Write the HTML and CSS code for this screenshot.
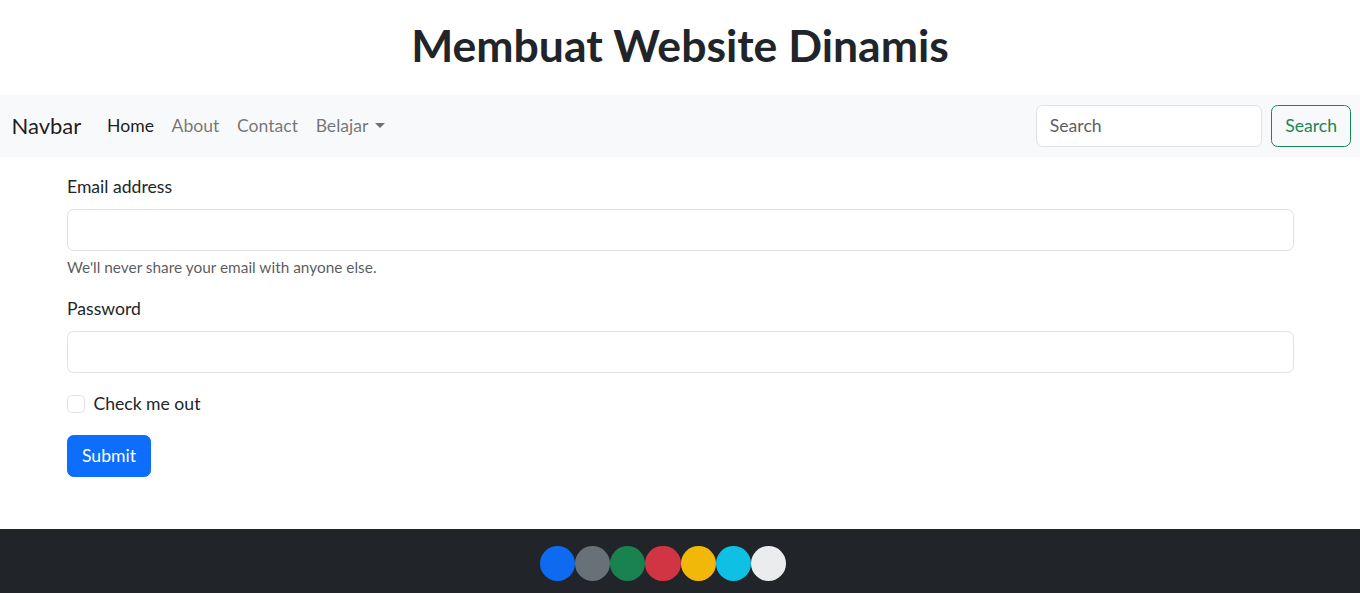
FILE: index.html
```html
<!DOCTYPE html>
<html lang="id">
<head>
<meta charset="utf-8">
<title>Membuat Website Dinamis</title>
<link rel="stylesheet" href="styles.css">
</head>
<body>
<header class="page-head">
  <h1 class="title">Membuat Website Dinamis</h1>
</header>
<nav class="navbar">
  <div class="nav-left">
    <a class="brand" href="#">Navbar</a>
    <ul class="nav-links">
      <li><a class="nav-link active" href="#">Home</a></li>
      <li><a class="nav-link" href="#">About</a></li>
      <li><a class="nav-link" href="#">Contact</a></li>
      <li><a class="nav-link dropdown" href="#">Belajar<span class="caret"></span></a></li>
    </ul>
  </div>
  <form class="search">
    <input class="search-input" type="search" placeholder="Search">
    <button class="btn-outline" type="button">Search</button>
  </form>
</nav>
<main class="container">
  <form class="form">
    <div class="field">
      <label class="label">Email address</label>
      <input class="control" type="email">
      <div class="help">We'll never share your email with anyone else.</div>
    </div>
    <div class="field">
      <label class="label">Password</label>
      <input class="control" type="password">
    </div>
    <div class="field check">
      <span class="check-box"></span>
      <label class="check-label">Check me out</label>
    </div>
    <button class="btn-primary" type="button">Submit</button>
  </form>
</main>
<footer class="footer">
  <div class="dots">
    <span class="dot c1"></span>
    <span class="dot c2"></span>
    <span class="dot c3"></span>
    <span class="dot c4"></span>
    <span class="dot c5"></span>
    <span class="dot c6"></span>
    <span class="dot c7"></span>
  </div>
</footer>
</body>
</html>
```
FILE: styles.css
```css
* { box-sizing: border-box; }
html, body { margin: 0; padding: 0; }
body {
  font-family: Lato, "Noto Sans", sans-serif;
  font-size: 17.6px;
  line-height: 1.5;
  color: #212529;
  background: #fff;
  min-height: 593px;
  display: flex;
  flex-direction: column;
}
.page-head {
  height: 95px;
  padding-top: 19px;
}
.title {
  margin: 0;
  text-align: center;
  font-size: 44.5px;
  font-weight: 700;
  line-height: 52.8px;
  color: #212529;
}
.navbar {
  height: 61.6px;
  background: #f8f9fa;
  display: flex;
  align-items: center;
  justify-content: space-between;
  padding: 0 8.8px 0 11.5px;
}
.nav-left { display: flex; align-items: center; }
.brand {
  font-size: 22px;
  color: rgba(0,0,0,.9);
  text-decoration: none;
  margin-right: 17px;
  line-height: 33px;
}
.nav-links {
  list-style: none;
  margin: 0;
  padding: 0;
  display: flex;
}
.nav-link {
  display: flex;
  align-items: center;
  padding: 8.8px;
  color: rgba(0,0,0,.55);
  text-decoration: none;
}
.nav-link.active { color: rgba(0,0,0,.9); }
.caret {
  display: inline-block;
  margin-left: 7px;
  border-top: 5.3px solid rgba(0,0,0,.55);
  border-left: 5.3px solid transparent;
  border-right: 5.3px solid transparent;
}
.search { display: flex; align-items: center; }
.search-input {
  width: 226.6px;
  height: 41.8px;
  margin-right: 8.8px;
  padding: 6.6px 13.2px;
  border: 1px solid #dee2e6;
  border-radius: 6.6px;
  font: inherit;
  color: #212529;
  background: #fff;
}
.search-input::placeholder { color: rgba(33,37,41,.75); }
.btn-outline {
  height: 41.8px;
  padding: 6.6px 13.2px;
  border: 1px solid #198754;
  border-radius: 6.6px;
  background: transparent;
  color: #198754;
  font: inherit;
}
.container {
  width: 1254.4px;
  margin: 0 auto;
  padding: 17.6px 13.2px 0 14.2px;
  flex: 1 0 auto;
}
.field { margin-bottom: 17.6px; }
.label {
  display: block;
  margin-bottom: 8.8px;
  line-height: 26.4px;
}
.control {
  display: block;
  width: 100%;
  height: 41.8px;
  padding: 6.6px 13.2px;
  border: 1px solid #dee2e6;
  border-radius: 6.6px;
  font: inherit;
  background: #fff;
}
.help {
  margin-top: 4.4px;
  font-size: 15.4px;
  line-height: 23.1px;
  color: rgba(33,37,41,.75);
}
.check {
  display: flex;
  align-items: center;
  min-height: 26.4px;
}
.check-box {
  width: 17.6px;
  height: 17.6px;
  border: 1px solid #dee2e6;
  border-radius: 4.4px;
  margin-right: 8.8px;
  background: #fff;
}
.check-label { line-height: 26.4px; }
.btn-primary {
  height: 41.8px;
  padding: 6.6px 14px;
  border: 1px solid #0d6efd;
  border-radius: 6.6px;
  background: #0d6efd;
  color: #fff;
  font: inherit;
}
.footer {
  background: #212529;
  padding: 16.5px 0 12px;
  margin-top: 52.5px;
}
.dots {
  display: flex;
  justify-content: center;
  padding-right: 34px;
}
.dot {
  width: 35.2px;
  height: 35.2px;
  border-radius: 50%;
  opacity: .94;
}
.c1 { background: #0d6efd; }
.c2 { background: #6c757d; }
.c3 { background: #198754; }
.c4 { background: #dc3545; }
.c5 { background: #ffc107; }
.c6 { background: #0dcaf0; }
.c7 { background: #f8f9fa; }
```
